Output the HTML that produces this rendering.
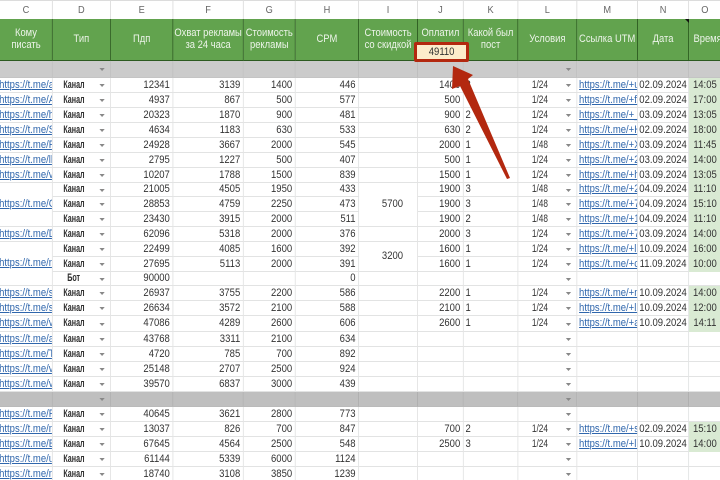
<!DOCTYPE html>
<html lang="ru"><head><meta charset="utf-8"><title>Таблица</title>
<style>
html,body{margin:0;padding:0;width:720px;height:480px;overflow:hidden;background:#fff}
#w{position:absolute;left:0;top:0;width:720px;height:480px;overflow:hidden;filter:blur(.35px)}
table{position:absolute;left:0;top:0;width:819px;transform:scaleX(.88);transform-origin:0 0;border-collapse:separate;border-spacing:0;table-layout:fixed;font:10.8px/13px "Liberation Sans",sans-serif;color:#333}
td{box-sizing:border-box;padding:0 3px 0 2px;border-right:1px solid #e2e3e3;border-bottom:1px solid #e2e3e3;text-align:right;white-space:nowrap;overflow:hidden;position:relative;vertical-align:middle}
tr.a td{text-align:center;color:#666;font-size:10.5px;border-top:1px solid #dcdcdc;border-right-color:#dcdcdc;border-bottom:0;padding:0}
tr.h td{background:#62a34e;color:#edf4ea;text-align:center;border-right:1px solid #2c5a20;border-bottom:1px solid #2c5a20;line-height:11.5px;padding:0;font-size:10.7px}
tr.g td{background:#cbcbcb;border-right-color:#bdbdbd;border-bottom-color:#c4c4c4}
tr.g2 td{background:#bfbfbf;border-right-color:#aeaeae;border-bottom-color:#bababa}
td.c{text-align:left;padding:0;color:#2f66ac;text-decoration:underline}
td.c span,td.m span{display:block;overflow:hidden}
td.c span{margin-left:-1px}
td.m{text-align:left;padding:0 0 0 2px;color:#2f66ac;text-decoration:underline}
td.d{text-align:center;padding:0 17px 0 0}
td.d b{display:inline-block;transform:scaleX(.75);font-weight:bold;color:#2d2d2d}
td.u{text-align:center;padding:0 16px 0 0}
td.u i{display:inline-block;font-style:normal;transform:scaleX(.87)}
td.d:after,td.u:after{content:"";position:absolute;right:6px;top:50%;margin-top:-1px;border:3px solid transparent;border-top:3px solid #888;border-bottom:0}
td.k{text-align:left;padding-left:2px}
td.n{text-align:center;padding:0}
td.t{text-align:center;padding:0;background:#d9ead3;border-bottom-color:#d9ead3;border-right:0}
td.o{border-right:0}
td.x{text-align:center;padding:0 0 0 10px}
#box{position:absolute;left:414px;top:42px;width:49px;height:14px;border:3px solid #b3280f;border-radius:2px;background:#fdeccb;font:10.8px/14px "Liberation Sans",sans-serif;color:#333;text-align:center}
#box span{display:inline-block;transform:scaleX(.88)}
#cm{position:absolute;left:685px;top:19px;width:0;height:0;border-top:4px solid #111;border-left:4px solid transparent}
svg{position:absolute;left:0;top:0}
</style></head><body><div id="w">
<table>
<colgroup><col style="width:60px"><col style="width:66px"><col style="width:71px"><col style="width:80px"><col style="width:59px"><col style="width:72px"><col style="width:67px"><col style="width:52px"><col style="width:62px"><col style="width:67px"><col style="width:69px"><col style="width:58px"><col style="width:36px"></colgroup>
<tr class="a" style="height:19px"><td>C</td><td>D</td><td>E</td><td>F</td><td>G</td><td>H</td><td>I</td><td>J</td><td>K</td><td>L</td><td>M</td><td>N</td><td class="o">O</td></tr>
<tr class="h" style="height:42px"><td>Кому<br>писать</td><td>Тип</td><td>Пдп</td><td>Охват рекламы<br>за 24 часа</td><td>Стоимость<br>рекламы</td><td>CPM</td><td>Стоимость<br>со скидкой</td><td>Оплатил<br>&nbsp;</td><td>Какой был<br>пост</td><td>Условия</td><td>Ссылка UTM</td><td>Дата</td><td style="border-right:0;text-align:left;padding-left:5px">Время</td></tr>
<tr class="g" style="height:17px"><td></td><td class="d"></td><td></td><td></td><td></td><td></td><td></td><td></td><td></td><td class="u"></td><td></td><td></td><td class="o"></td></tr>
<tr style="height:15px"><td class="c"><span>https://t.me/abcd</span></td><td class="d"><b>Канал</b></td><td>12341</td><td>3139</td><td>1400</td><td>446</td><td></td><td>1400</td><td class="k">2</td><td class="u"><i>1/24</i></td><td class="m"><span>https://t.me/+uabcdef</span></td><td class="n">02.09.2024</td><td class="t">14:05</td></tr>
<tr style="height:15px"><td class="c"><span>https://t.me/Abcd</span></td><td class="d"><b>Канал</b></td><td>4937</td><td>867</td><td>500</td><td>577</td><td></td><td>500</td><td class="k"></td><td class="u"><i>1/24</i></td><td class="m"><span>https://t.me/+fabcdef</span></td><td class="n">02.09.2024</td><td class="t">17:00</td></tr>
<tr style="height:15px"><td class="c"><span>https://t.me/habc</span></td><td class="d"><b>Канал</b></td><td>20323</td><td>1870</td><td>900</td><td>481</td><td></td><td>900</td><td class="k">2</td><td class="u"><i>1/24</i></td><td class="m"><span>https://t.me/+_abcdef</span></td><td class="n">03.09.2024</td><td class="t">13:05</td></tr>
<tr style="height:15px"><td class="c"><span>https://t.me/Sabc</span></td><td class="d"><b>Канал</b></td><td>4634</td><td>1183</td><td>630</td><td>533</td><td></td><td>630</td><td class="k">2</td><td class="u"><i>1/24</i></td><td class="m"><span>https://t.me/+Habcdef</span></td><td class="n">02.09.2024</td><td class="t">18:00</td></tr>
<tr style="height:15px"><td class="c"><span>https://t.me/Fabc</span></td><td class="d"><b>Канал</b></td><td>24928</td><td>3667</td><td>2000</td><td>545</td><td></td><td>2000</td><td class="k">1</td><td class="u"><i>1/48</i></td><td class="m"><span>https://t.me/+Xabcdef</span></td><td class="n">03.09.2024</td><td class="t">11:45</td></tr>
<tr style="height:15px"><td class="c"><span>https://t.me/llabc</span></td><td class="d"><b>Канал</b></td><td>2795</td><td>1227</td><td>500</td><td>407</td><td></td><td>500</td><td class="k">1</td><td class="u"><i>1/24</i></td><td class="m"><span>https://t.me/+2abcdef</span></td><td class="n">03.09.2024</td><td class="t">14:00</td></tr>
<tr style="height:15px"><td class="c"><span>https://t.me/vabc</span></td><td class="d"><b>Канал</b></td><td>10207</td><td>1788</td><td>1500</td><td>839</td><td></td><td>1500</td><td class="k">1</td><td class="u"><i>1/24</i></td><td class="m"><span>https://t.me/+habcdef</span></td><td class="n">03.09.2024</td><td class="t">13:05</td></tr>
<tr style="height:14px"><td class="c" rowspan="3"><span>https://t.me/Cabc</span></td><td class="d"><b>Канал</b></td><td>21005</td><td>4505</td><td>1950</td><td>433</td><td class="x" rowspan="3">5700</td><td>1900</td><td class="k">3</td><td class="u"><i>1/48</i></td><td class="m"><span>https://t.me/+2abcdef</span></td><td class="n">04.09.2024</td><td class="t">11:10</td></tr>
<tr style="height:15px"><td class="d"><b>Канал</b></td><td>28853</td><td>4759</td><td>2250</td><td>473</td><td>1900</td><td class="k">3</td><td class="u"><i>1/48</i></td><td class="m"><span>https://t.me/+7abcdef</span></td><td class="n">04.09.2024</td><td class="t">15:10</td></tr>
<tr style="height:15px"><td class="d"><b>Канал</b></td><td>23430</td><td>3915</td><td>2000</td><td>511</td><td>1900</td><td class="k">2</td><td class="u"><i>1/48</i></td><td class="m"><span>https://t.me/+1abcdef</span></td><td class="n">04.09.2024</td><td class="t">11:10</td></tr>
<tr style="height:15px"><td class="c"><span>https://t.me/Dabc</span></td><td class="d"><b>Канал</b></td><td>62096</td><td>5318</td><td>2000</td><td>376</td><td></td><td>2000</td><td class="k">3</td><td class="u"><i>1/24</i></td><td class="m"><span>https://t.me/+7abcdef</span></td><td class="n">03.09.2024</td><td class="t">14:00</td></tr>
<tr style="height:15px"><td class="c" rowspan="3"><span>https://t.me/nabc</span></td><td class="d"><b>Канал</b></td><td>22499</td><td>4085</td><td>1600</td><td>392</td><td class="x" rowspan="2">3200</td><td>1600</td><td class="k">1</td><td class="u"><i>1/24</i></td><td class="m"><span>https://t.me/+llabcde</span></td><td class="n">10.09.2024</td><td class="t">16:00</td></tr>
<tr style="height:15px"><td class="d"><b>Канал</b></td><td>27695</td><td>5113</td><td>2000</td><td>391</td><td>1600</td><td class="k">1</td><td class="u"><i>1/24</i></td><td class="m"><span>https://t.me/+cabcdef</span></td><td class="n">11.09.2024</td><td class="t">10:00</td></tr>
<tr style="height:14px"><td class="d"><b>Бот</b></td><td>90000</td><td></td><td></td><td>0</td><td></td><td></td><td class="k"></td><td class="u"></td><td></td><td></td><td class="o"></td></tr>
<tr style="height:15px"><td class="c"><span>https://t.me/sabc</span></td><td class="d"><b>Канал</b></td><td>26937</td><td>3755</td><td>2200</td><td>586</td><td></td><td>2200</td><td class="k">1</td><td class="u"><i>1/24</i></td><td class="m"><span>https://t.me/+nabcdef</span></td><td class="n">10.09.2024</td><td class="t">14:00</td></tr>
<tr style="height:15px"><td class="c"><span>https://t.me/sabc</span></td><td class="d"><b>Канал</b></td><td>26634</td><td>3572</td><td>2100</td><td>588</td><td></td><td>2100</td><td class="k">1</td><td class="u"><i>1/24</i></td><td class="m"><span>https://t.me/+llabcde</span></td><td class="n">10.09.2024</td><td class="t">12:00</td></tr>
<tr style="height:16px"><td class="c"><span>https://t.me/vabc</span></td><td class="d"><b>Канал</b></td><td>47086</td><td>4289</td><td>2600</td><td>606</td><td></td><td>2600</td><td class="k">1</td><td class="u"><i>1/24</i></td><td class="m"><span>https://t.me/+aabcdef</span></td><td class="n">10.09.2024</td><td class="t">14:11</td></tr>
<tr style="height:15px"><td class="c"><span>https://t.me/aabc</span></td><td class="d"><b>Канал</b></td><td>43768</td><td>3311</td><td>2100</td><td>634</td><td></td><td></td><td class="k"></td><td class="u"></td><td></td><td></td><td class="o"></td></tr>
<tr style="height:15px"><td class="c"><span>https://t.me/Tabc</span></td><td class="d"><b>Канал</b></td><td>4720</td><td>785</td><td>700</td><td>892</td><td></td><td></td><td class="k"></td><td class="u"></td><td></td><td></td><td class="o"></td></tr>
<tr style="height:15px"><td class="c"><span>https://t.me/vabc</span></td><td class="d"><b>Канал</b></td><td>25148</td><td>2707</td><td>2500</td><td>924</td><td></td><td></td><td class="k"></td><td class="u"></td><td></td><td></td><td class="o"></td></tr>
<tr style="height:15px"><td class="c"><span>https://t.me/vabc</span></td><td class="d"><b>Канал</b></td><td>39570</td><td>6837</td><td>3000</td><td>439</td><td></td><td></td><td class="k"></td><td class="u"></td><td></td><td></td><td class="o"></td></tr>
<tr class="g2" style="height:15px"><td></td><td class="d"></td><td></td><td></td><td></td><td></td><td></td><td></td><td></td><td class="u"></td><td></td><td></td><td class="o"></td></tr>
<tr style="height:15px"><td class="c"><span>https://t.me/Fabc</span></td><td class="d"><b>Канал</b></td><td>40645</td><td>3621</td><td>2800</td><td>773</td><td></td><td></td><td class="k"></td><td class="u"></td><td></td><td></td><td class="o"></td></tr>
<tr style="height:15px"><td class="c"><span>https://t.me/nabc</span></td><td class="d"><b>Канал</b></td><td>13037</td><td>826</td><td>700</td><td>847</td><td></td><td>700</td><td class="k">2</td><td class="u"><i>1/24</i></td><td class="m"><span>https://t.me/+sabcdef</span></td><td class="n">02.09.2024</td><td class="t">15:10</td></tr>
<tr style="height:15px"><td class="c"><span>https://t.me/Eabc</span></td><td class="d"><b>Канал</b></td><td>67645</td><td>4564</td><td>2500</td><td>548</td><td></td><td>2500</td><td class="k">3</td><td class="u"><i>1/24</i></td><td class="m"><span>https://t.me/+llabcde</span></td><td class="n">10.09.2024</td><td class="t">14:00</td></tr>
<tr style="height:15px"><td class="c"><span>https://t.me/uabc</span></td><td class="d"><b>Канал</b></td><td>61144</td><td>5339</td><td>6000</td><td>1124</td><td></td><td></td><td class="k"></td><td class="u"></td><td></td><td></td><td class="o"></td></tr>
<tr style="height:15px"><td class="c"><span>https://t.me/nabc</span></td><td class="d"><b>Канал</b></td><td>18740</td><td>3108</td><td>3850</td><td>1239</td><td></td><td></td><td class="k"></td><td class="u"></td><td></td><td></td><td class="o"></td></tr>
</table>
<div id="cm"></div>
<div id="box"><span>49110</span></div>
<svg width="720" height="480" viewBox="0 0 720 480"><polygon points="453,66 473,75 468,79 510,178 507,179 460,86 452,89" fill="#b3280f"/></svg>
</div></body></html>
